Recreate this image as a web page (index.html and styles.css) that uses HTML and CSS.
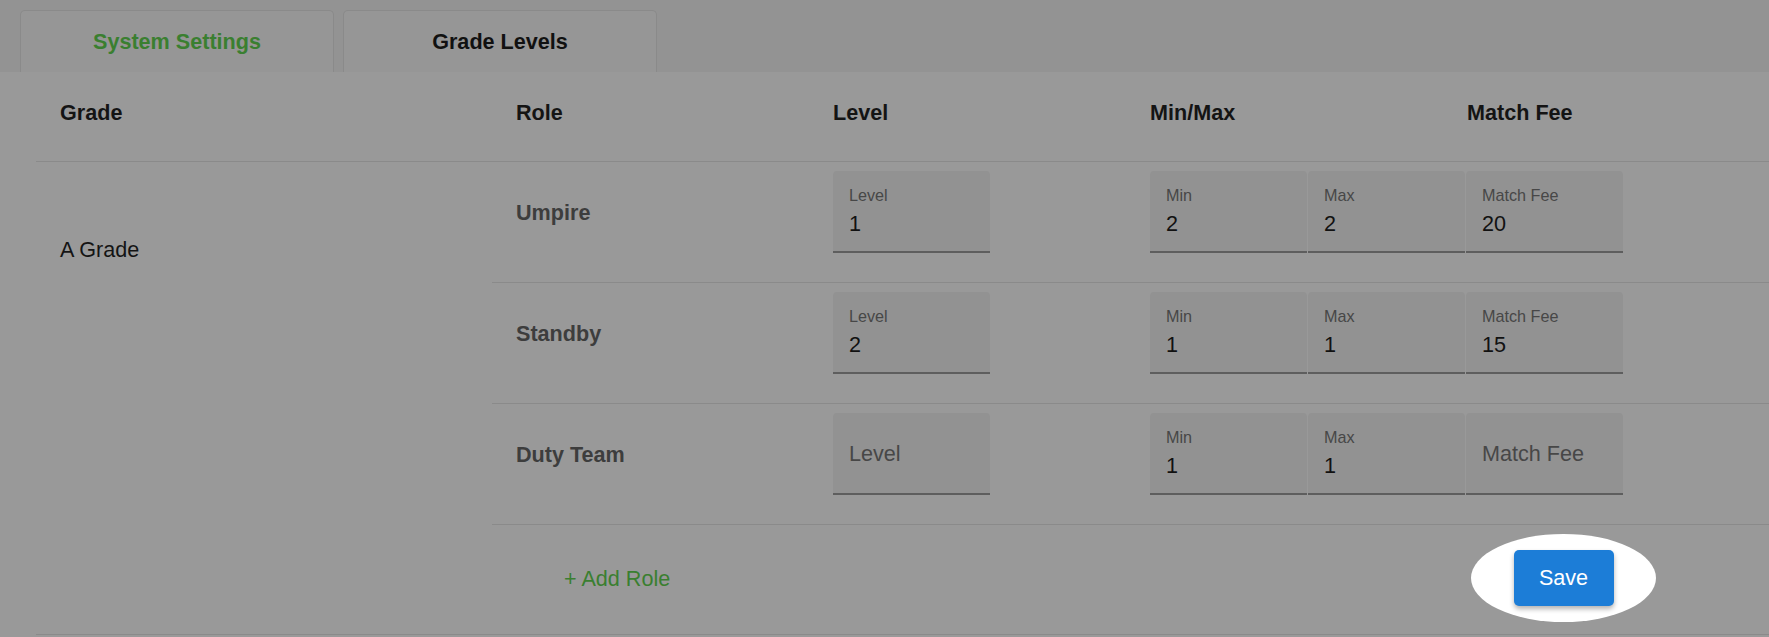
FILE: index.html
```html
<!DOCTYPE html>
<html lang="en">
<head>
  <meta charset="UTF-8">
  <meta name="viewport" content="width=device-width, initial-scale=1.0">
  <title>Grade Levels</title>
  <link rel="stylesheet" href="styles.css">
</head>
<body>
  <!-- Tabs -->
  <div class="tabs">
    <div class="tab tab-link">System Settings</div>
    <div class="tab tab-current">Grade Levels</div>
  </div>

  <div class="panel">
    <!-- Table header -->
    <div class="table-head">
      <div>Grade</div>
      <div>Role</div>
      <div>Level</div>
      <div>Min/Max</div>
      <div>Match Fee</div>
    </div>

    <!-- A Grade -->
    <div class="grade-block">
      <div class="grade-name">A Grade</div>
      <div class="roles">
        <div class="role-row">
          <div class="role-name">Umpire</div>
          <div class="field field-level"><label>Level</label><span>1</span></div>
          <div class="field-group">
            <div class="field"><label>Min</label><span>2</span></div>
            <div class="field"><label>Max</label><span>2</span></div>
            <div class="field"><label>Match Fee</label><span>20</span></div>
          </div>
        </div>
        <div class="role-row">
          <div class="role-name">Standby</div>
          <div class="field field-level"><label>Level</label><span>2</span></div>
          <div class="field-group">
            <div class="field"><label>Min</label><span>1</span></div>
            <div class="field"><label>Max</label><span>1</span></div>
            <div class="field"><label>Match Fee</label><span>15</span></div>
          </div>
        </div>
        <div class="role-row">
          <div class="role-name">Duty Team</div>
          <div class="field field-level empty">Level</div>
          <div class="field-group">
            <div class="field"><label>Min</label><span>1</span></div>
            <div class="field"><label>Max</label><span>1</span></div>
            <div class="field empty">Match Fee</div>
          </div>
        </div>
        <div class="add-row">
          <a href="#" class="add-role">+ Add Role</a>
          <div class="spotlight">
            <button class="btn-save">Save</button>
          </div>
        </div>
      </div>
    </div>
  </div>
</body>
</html>
```

FILE: styles.css
```css
* {
  margin: 0;
  padding: 0;
  box-sizing: border-box;
}

body {
  background-color: #999999;
  font-family: "Liberation Sans", Arial, sans-serif;
  font-size: 21.6px;
  line-height: 25px;
  color: #141414;
}

/* Tabs */
.tabs {
  background-color: #939393;
  height: 72px;
  padding: 10px 0 0 20px;
  display: flex;
  gap: 9px;
}
.tab {
  width: 314px;
  height: 62px;
  background-color: #969696;
  border: 1px solid #8a8a8a;
  border-bottom: none;
  border-radius: 5px 5px 0 0;
  display: flex;
  align-items: center;
  justify-content: center;
  font-weight: bold;
}
.tab-link {
  color: #3a7f30;
}
.tab-current {
  color: #111;
}

/* Table */
.panel {
  padding-left: 36px;
}
.table-head {
  display: grid;
  grid-template-columns: 456px 317px 317px 317px 1fr;
  padding: 28px 0 36px;
  border-bottom: 1px solid #8a8a8a;
  font-weight: bold;
}
.table-head div {
  padding-left: 24px;
}

.grade-block {
  display: flex;
  border-bottom: 1px solid #8a8a8a;
}
.grade-name {
  width: 456px;
  padding: 75px 0 0 24px;
}
.roles {
  flex: 1;
}
.role-row {
  display: flex;
  align-items: center;
  padding: 9px 0 29px 24px;
  border-bottom: 1px solid #8a8a8a;
}
.role-name {
  width: 317px;
  font-weight: bold;
  color: #3d3d3d;
}

/* Filled inputs */
.field {
  width: 157px;
  height: 82px;
  padding: 15px 16px;
  background-color: #929292;
  border-bottom: 2px solid #5e5e5e;
  border-radius: 4px 4px 0 0;
}
.field label {
  display: block;
  font-size: 16.2px;
  line-height: 19px;
  color: #474747;
}
.field span {
  display: block;
  margin-top: 6px;
  color: #111;
}
.field.empty {
  display: flex;
  align-items: center;
  color: #474747;
}
.field-level {
  margin-right: 160px;
}
.field-group {
  display: flex;
  gap: 1px;
}

/* Footer row */
.add-row {
  height: 109px;
  padding: 0 113px 3px 72px;
  display: flex;
  align-items: center;
  justify-content: space-between;
}
.add-role {
  color: #3a7f30;
  text-decoration: none;
}
.spotlight {
  width: 185px;
  height: 88px;
  border-radius: 50%;
  background-color: #fff;
  display: flex;
  align-items: center;
  justify-content: center;
}
.btn-save {
  width: 100px;
  height: 56px;
  border: none;
  border-radius: 5px;
  background-color: #1c7dd7;
  color: #fff;
  font-family: inherit;
  font-size: 21.6px;
  box-shadow: 0 3px 5px rgba(0, 0, 0, 0.3);
  cursor: pointer;
}
```
